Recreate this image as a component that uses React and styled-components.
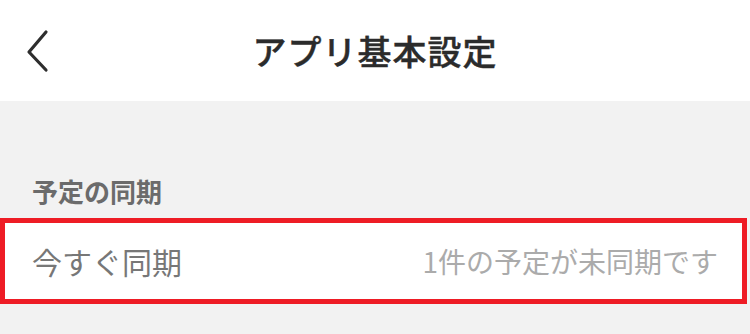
import React from "react";
import styled, { createGlobalStyle } from "styled-components";

const Global = createGlobalStyle`
  html, body { margin: 0; padding: 0; background: #f2f2f2; }
  body { font-family: "Noto Sans CJK JP", "Noto Sans", sans-serif; }
  #root { width: 750px; min-height: 334px; background: #f2f2f2; }
`;

const Header = styled.header`
  height: 101px;
  background: #ffffff;
  display: grid;
  grid-template-columns: 100px 1fr 100px;
  align-items: center;
`;

const BackButton = styled.button`
  border: none;
  background: none;
  padding: 0 0 0 24px;
  display: flex;
  align-items: center;
  height: 100%;
  cursor: pointer;
`;

const Title = styled.h1`
  margin: 0;
  text-align: center;
  font-size: 34px;
  font-weight: 500;
  color: #2b2b2b;
  letter-spacing: 1px;
  -webkit-text-stroke: 0.4px #2b2b2b;
`;

const Section = styled.section`
  padding-top: 73px;
`;

const SectionLabel = styled.div`
  padding: 0 32px;
  font-size: 26px;
  font-weight: 700;
  color: #6b6b6b;
  line-height: 34px;
  margin-bottom: 10px;
`;

const Row = styled.div`
  margin-right: 3px;
  height: 76px;
  background: #ffffff;
  border: 5px solid #ee1c25;
  display: flex;
  align-items: center;
  justify-content: space-between;
  padding: 0 24px 0 27px;
`;

const RowLabel = styled.span`
  font-size: 30px;
  color: #777777;
`;

const RowValue = styled.span`
  font-size: 28px;
  color: #ababab;
`;

export default function App() {
  return (
    <>
      <Global />
      <Header>
        <BackButton aria-label="戻る">
          <svg width="26" height="44" viewBox="0 0 26 44">
            <path d="M22 3 L5 23 L22 41" fill="none" stroke="#2e2e2e" strokeWidth="3.2" strokeLinecap="round" strokeLinejoin="round" />
          </svg>
        </BackButton>
        <Title>アプリ基本設定</Title>
        <div />
      </Header>
      <Section>
        <SectionLabel>予定の同期</SectionLabel>
        <Row>
          <RowLabel>今すぐ同期</RowLabel>
          <RowValue>1件の予定が未同期です</RowValue>
        </Row>
      </Section>
    </>
  );
}
